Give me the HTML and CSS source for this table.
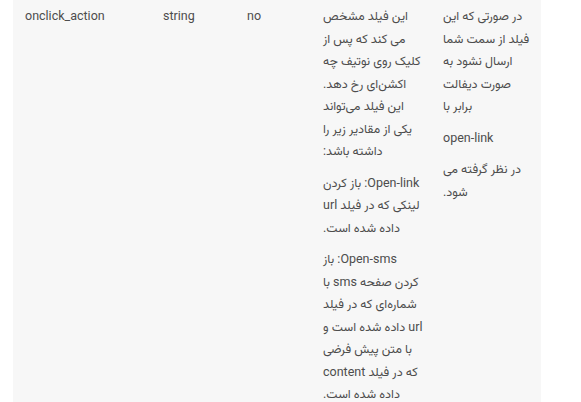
FILE: index.html
```html
<!DOCTYPE html>
<html lang="fa">
<head>
<meta charset="utf-8">
<link rel="stylesheet" href="styles.css">
</head>
<body>
<div class="panel">
  <div class="row">
    <div class="cell ltr">onclick_action</div>
    <div class="cell ltr">string</div>
    <div class="cell ltr">no</div>
    <div class="cell rtl">
      <p>این فیلد مشخص<br>می کند که پس از<br>کلیک روی نوتیف چه<br>اکشن‌ای رخ دهد.<br>این فیلد می‌تواند<br>یکی از مقادیر زیر را<br>داشته باشد:</p>
      <p>Open-link: باز کردن<br>لینکی که در فیلد url<br>داده شده است.</p>
      <p>Open-sms: باز<br>کردن صفحه sms با<br>شماره‌ای که در فیلد<br>url داده شده است و<br>با متن پیش فرضی<br>که در فیلد content<br>داده شده است.</p>
    </div>
    <div class="cell rtl">
      <p>در صورتی که این<br>فیلد از سمت شما<br>ارسال نشود به<br>صورت دیفالت<br>برابر با</p>
      <p>open-link</p>
      <p>در نظر گرفته می<br>شود.</p>
    </div>
  </div>
</div>
</body>
</html>
```
FILE: styles.css
```css
html, body {
  margin: 0;
  padding: 0;
  background: #ffffff;
}
body {
  font-family: Roboto, "Vazirmatn", "Noto Sans Arabic", "DejaVu Sans Condensed", "DejaVu Sans", sans-serif;
  font-size: 12.5px;
  line-height: 22.5px;
  color: #4d4d4d;
}
.panel {
  margin-left: 13px;
  width: 528px;
  min-height: 402px;
  background: #f7f7f7;
  padding-top: 5px;
  box-sizing: border-box;
}
.row {
  display: grid;
  grid-template-columns: 138px 84px 76px 120px 110px;
  align-items: start;
}
.cell {
  padding: 0 0 0 12px;
  white-space: nowrap;
}
.ltr {
  direction: ltr;
  text-align: left;
}
.rtl {
  direction: rtl;
  text-align: left;
}
.rtl p {
  margin: 0 0 9px 0;
}
.rtl p:last-child {
  margin-bottom: 0;
}
```
